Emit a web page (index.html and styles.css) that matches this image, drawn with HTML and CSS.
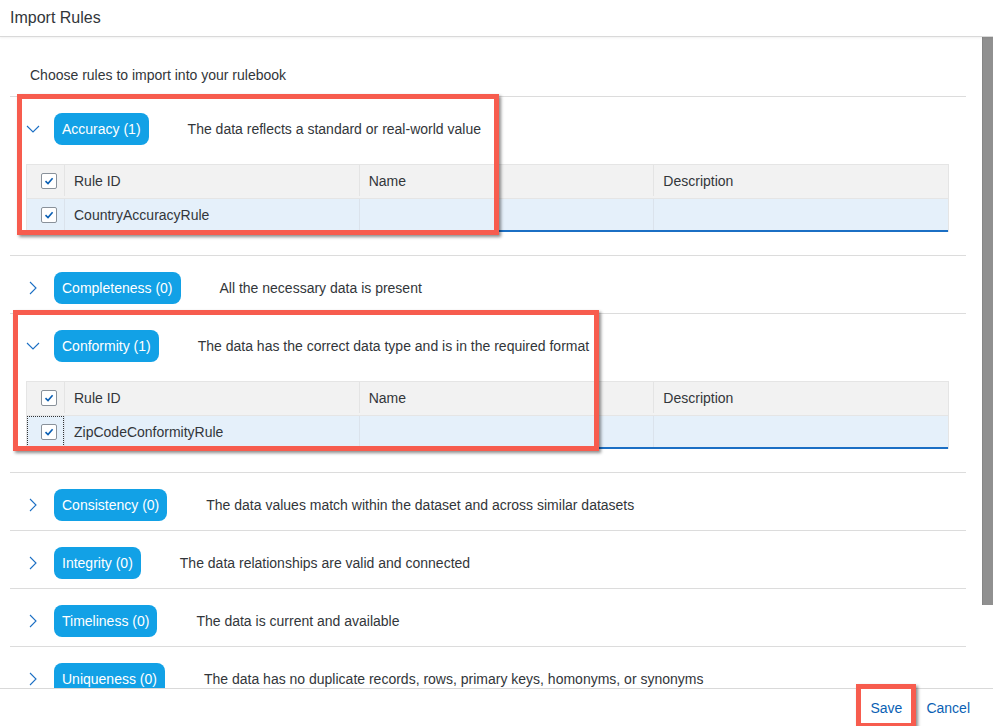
FILE: index.html
```html
<!DOCTYPE html>
<html lang="en">
<head>
<meta charset="utf-8">
<title>Import Rules</title>
<link rel="stylesheet" href="styles.css">
</head>
<body>
<div class="dialog">
  <header class="dlg-head"><h1 class="dlg-title">Import Rules</h1></header>
  <div class="dlg-body">
    <div class="scroll">
      <p class="intro">Choose rules to import into your rulebook</p>

      <section class="group open">
        <div class="group-head">
          <span class="chev"><svg width="16" height="16" viewBox="0 0 16 16"><path d="M2 5 L8 11 L14 5" fill="none" stroke="#1b6fc4" stroke-width="1.1"/></svg></span>
          <span class="tag">Accuracy (1)</span>
          <span class="desc">The data reflects a standard or real-world value</span>
        </div>
        <div class="rtable">
          <div class="rrow thead">
            <div class="cell cb"><span class="check"><svg width="12" height="12" viewBox="0 0 12 12"><path d="M2.5 6.2 L5 8.6 L9.6 3.2" fill="none" stroke="#0a5fb4" stroke-width="1.6"/></svg></span></div>
            <div class="cell">Rule ID</div>
            <div class="cell">Name</div>
            <div class="cell">Description</div>
          </div>
          <div class="rrow sel">
            <div class="cell cb"><span class="check"><svg width="12" height="12" viewBox="0 0 12 12"><path d="M2.5 6.2 L5 8.6 L9.6 3.2" fill="none" stroke="#0a5fb4" stroke-width="1.6"/></svg></span></div>
            <div class="cell">CountryAccuracyRule</div>
            <div class="cell"></div>
            <div class="cell"></div>
          </div>
        </div>
      </section>

      <section class="group">
        <div class="group-head">
          <span class="chev"><svg width="16" height="16" viewBox="0 0 16 16"><path d="M5 2 L11 8 L5 14" fill="none" stroke="#1b6fc4" stroke-width="1.1"/></svg></span>
          <span class="tag">Completeness (0)</span>
          <span class="desc">All the necessary data is present</span>
        </div>
      </section>

      <section class="group open">
        <div class="group-head">
          <span class="chev"><svg width="16" height="16" viewBox="0 0 16 16"><path d="M2 5 L8 11 L14 5" fill="none" stroke="#1b6fc4" stroke-width="1.1"/></svg></span>
          <span class="tag">Conformity (1)</span>
          <span class="desc">The data has the correct data type and is in the required format</span>
        </div>
        <div class="rtable">
          <div class="rrow thead">
            <div class="cell cb"><span class="check"><svg width="12" height="12" viewBox="0 0 12 12"><path d="M2.5 6.2 L5 8.6 L9.6 3.2" fill="none" stroke="#0a5fb4" stroke-width="1.6"/></svg></span></div>
            <div class="cell">Rule ID</div>
            <div class="cell">Name</div>
            <div class="cell">Description</div>
          </div>
          <div class="rrow sel">
            <div class="cell cb focus"><span class="check"><svg width="12" height="12" viewBox="0 0 12 12"><path d="M2.5 6.2 L5 8.6 L9.6 3.2" fill="none" stroke="#0a5fb4" stroke-width="1.6"/></svg></span></div>
            <div class="cell">ZipCodeConformityRule</div>
            <div class="cell"></div>
            <div class="cell"></div>
          </div>
        </div>
      </section>

      <section class="group">
        <div class="group-head">
          <span class="chev"><svg width="16" height="16" viewBox="0 0 16 16"><path d="M5 2 L11 8 L5 14" fill="none" stroke="#1b6fc4" stroke-width="1.1"/></svg></span>
          <span class="tag">Consistency (0)</span>
          <span class="desc">The data values match within the dataset and across similar datasets</span>
        </div>
      </section>

      <section class="group">
        <div class="group-head">
          <span class="chev"><svg width="16" height="16" viewBox="0 0 16 16"><path d="M5 2 L11 8 L5 14" fill="none" stroke="#1b6fc4" stroke-width="1.1"/></svg></span>
          <span class="tag">Integrity (0)</span>
          <span class="desc">The data relationships are valid and connected</span>
        </div>
      </section>

      <section class="group">
        <div class="group-head">
          <span class="chev"><svg width="16" height="16" viewBox="0 0 16 16"><path d="M5 2 L11 8 L5 14" fill="none" stroke="#1b6fc4" stroke-width="1.1"/></svg></span>
          <span class="tag">Timeliness (0)</span>
          <span class="desc">The data is current and available</span>
        </div>
      </section>

      <section class="group">
        <div class="group-head">
          <span class="chev"><svg width="16" height="16" viewBox="0 0 16 16"><path d="M5 2 L11 8 L5 14" fill="none" stroke="#1b6fc4" stroke-width="1.1"/></svg></span>
          <span class="tag">Uniqueness (0)</span>
          <span class="desc">The data has no duplicate records, rows, primary keys, homonyms, or synonyms</span>
        </div>
      </section>
    </div>
    <div class="sbar"><div class="thumb"></div></div>
  </div>
  <footer class="dlg-foot">
    <button class="lnk" type="button">Save</button>
    <button class="lnk" type="button">Cancel</button>
  </footer>

  <div class="mark mark-acc"></div>
  <div class="mark mark-conf"></div>
  <div class="mark mark-save"></div>
</div>
</body>
</html>
```

FILE: styles.css
```css
* { box-sizing: border-box; }

html, body {
  margin: 0;
  padding: 0;
  background: #ffffff;
}

body {
  font-family: "Liberation Sans", Arial, sans-serif;
  font-size: 14px;
  color: #32363a;
}

.dialog {
  position: relative;
  width: 993px;
  height: 726px;
  display: flex;
  flex-direction: column;
  overflow: hidden;
  background: #fff;
}

.dlg-head {
  height: 37px;
  flex: none;
  border-bottom: 1px solid #d9d9d9;
  box-shadow: 0 1px 2px rgba(0, 0, 0, 0.06);
  position: relative;
  z-index: 1;
}

.dlg-title {
  margin: 0;
  padding-left: 10px;
  font-size: 16px;
  font-weight: normal;
  line-height: 36px;
  color: #32363a;
}

.dlg-body {
  flex: 1;
  min-height: 0;
  display: flex;
}

.scroll {
  flex: 1;
  overflow: hidden;
  padding: 0 16px 0 10px;
}

.sbar {
  width: 11px;
  flex: none;
}

.thumb {
  height: 568px;
  background: #909090;
  border-left: 1px solid #858585;
}

.intro {
  margin: 0;
  padding: 30px 0 12px 20px;
  line-height: 17px;
}

.group {
  border-top: 1px solid #dcdcdc;
  padding: 16px 0 9px;
}

.group-head {
  display: flex;
  align-items: center;
  height: 32px;
  padding-left: 15px;
}

.chev {
  width: 16px;
  height: 16px;
  display: flex;
  flex: none;
}

.tag {
  margin-left: 13px;
  height: 32px;
  line-height: 32px;
  padding: 0 8px;
  border-radius: 8px;
  background: #12a1e6;
  color: #ffffff;
  white-space: nowrap;
}

.desc {
  margin-left: 39px;
  white-space: nowrap;
}

.rtable {
  margin: 19px 17px 14px 16px;
  border: 1px solid #e5e5e5;
  border-bottom: none;
}

.rrow {
  display: grid;
  grid-template-columns: 37px 1fr 1fr 1fr;
}

.rrow.thead {
  height: 34px;
  padding-bottom: 2px;
  background: #f2f2f2;
  border-bottom: 1px solid #e5e5e5;
}

.rrow.sel {
  height: 33px;
  background: #e5f0fa;
  border-bottom: 2px solid #1b6fc4;
}

.cell {
  display: flex;
  align-items: center;
  padding-left: 9px;
  border-left: 1px solid #e4e4e4;
  white-space: nowrap;
}

.rrow.sel .cell {
  border-left-color: #dbe3ec;
}

.cell.cb {
  border-left: none;
  padding-left: 14px;
}

.cell.focus {
  outline: 1px dotted #333;
  outline-offset: -1px;
}

.check {
  width: 16px;
  height: 16px;
  border: 1px solid #89919a;
  border-radius: 2px;
  background: #fff;
  display: flex;
  align-items: center;
  justify-content: center;
}

.dlg-foot {
  height: 38px;
  flex: none;
  border-top: 1px solid #d9d9d9;
  display: flex;
  justify-content: flex-end;
  align-items: center;
  padding-right: 11px;
}

.lnk {
  font-family: inherit;
  font-size: 14px;
  color: #0a5fb4;
  background: none;
  border: none;
  padding: 0 12px;
  height: 36px;
  cursor: pointer;
}

.mark {
  position: absolute;
  border: 5px solid #f75c4e;
  box-shadow: 2px 2px 3px rgba(0, 0, 0, 0.45);
  pointer-events: none;
}

.mark-acc {
  left: 17px;
  top: 94px;
  width: 482px;
  height: 141px;
}

.mark-conf {
  left: 13px;
  top: 310px;
  width: 586px;
  height: 141px;
}

.mark-save {
  left: 856px;
  top: 684px;
  width: 60px;
  height: 44px;
}
```
